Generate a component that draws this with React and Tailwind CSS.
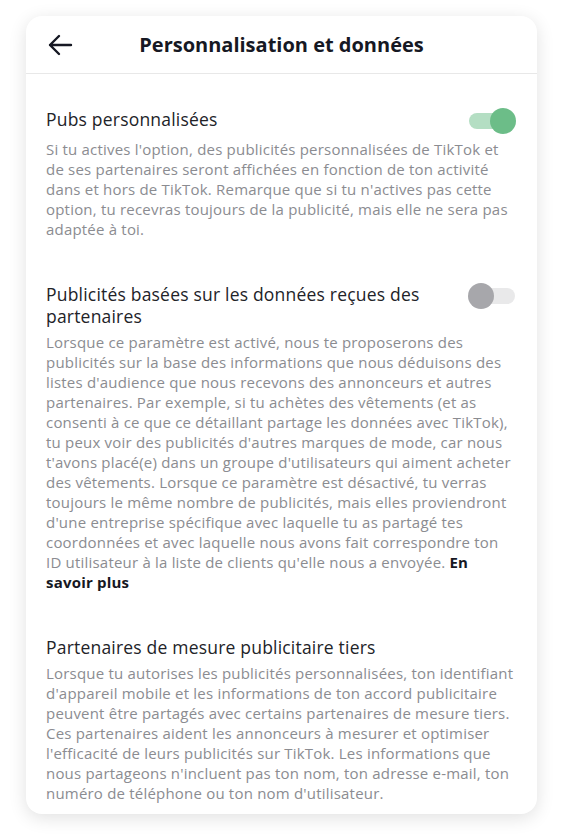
import React, { useState } from 'react';

const Toggle = ({ on, onChange }) => (
  <button
    onClick={onChange}
    className="relative mr-[4px] w-[48px] h-[26px] shrink-0 flex items-center"
  >
    <span className={`absolute left-[1px] right-[1px] h-[16px] rounded-full ${on ? 'bg-[#b4dec3]' : 'bg-[#e9e9ea]'}`}></span>
    <span
      className={`absolute top-0 w-[26px] h-[26px] rounded-full ${on ? 'right-0 bg-[#6cbd88]' : 'left-0 bg-[#a7a7ab]'}`}
    ></span>
  </button>
);

const Section = ({ title, children, toggle }) => (
  <div>
    <div className="flex items-start justify-between gap-6">
      <h3 className="text-[17.5px] leading-[22px] tracking-[0.2px] text-[#222328] max-w-[400px]">{title}</h3>
      {toggle}
    </div>
    <p className="mt-[5px] text-[15px] leading-[20px] tracking-[0.2px] text-[#8b8c91]">{children}</p>
  </div>
);

export default function App() {
  const [pubs, setPubs] = useState(true);
  const [partners, setPartners] = useState(false);

  return (
    <div className="min-h-screen bg-white pt-[16px] pb-[24px] font-['Open_Sans',sans-serif]">
      <div className="ml-[26px] w-[511px] bg-white rounded-2xl shadow-[0_4px_18px_rgba(0,0,0,0.12)]">
        {/* Header */}
        <div className="relative h-[58px] flex items-center justify-center border-b border-[#e8e8e8]">
          <button className="absolute left-[21px] top-[17px] w-[26px] h-[24px]">
            <svg width="26" height="24" viewBox="0 0 26 24" fill="none">
              <path d="M24 12H3M12 3L3 12L12 21" stroke="#161823" strokeWidth="2.4" strokeLinecap="round" strokeLinejoin="round" />
            </svg>
          </button>
          <h1 className="text-[20px] font-bold text-[#161823]">Personnalisation et données</h1>
        </div>

        {/* Contenu */}
        <div className="pl-[20px] pr-[17px] pt-[34px] pb-[11px] flex flex-col gap-[44px]">
          <Section
            title="Pubs personnalisées"
            toggle={<Toggle on={pubs} onChange={() => setPubs(!pubs)} />}
          >
            Si tu actives l'option, des publicités personnalisées de TikTok et de ses partenaires seront affichées en fonction de ton activité dans et hors de TikTok. Remarque que si tu n'actives pas cette option, tu recevras toujours de la publicité, mais elle ne sera pas adaptée à toi.
          </Section>

          <Section
            title="Publicités basées sur les données reçues des partenaires"
            toggle={<Toggle on={partners} onChange={() => setPartners(!partners)} />}
          >
            Lorsque ce paramètre est activé, nous te proposerons des publicités sur la base des informations que nous déduisons des listes d'audience que nous recevons des annonceurs et autres partenaires. Par exemple, si tu achètes des vêtements (et as consenti à ce que ce détaillant partage les données avec TikTok), tu peux voir des publicités d'autres marques de mode, car nous t'avons placé(e) dans un groupe d'utilisateurs qui aiment acheter des vêtements. Lorsque ce paramètre est désactivé, tu verras toujours le même nombre de publicités, mais elles proviendront d'une entreprise spécifique avec laquelle tu as partagé tes coordonnées et avec laquelle nous avons fait correspondre ton ID{'\u00a0'}utilisateur à la liste de clients qu'elle nous a envoyée.{' '}
            <a href="#" className="font-bold text-[#161823]">En savoir{'\u00a0'}plus</a>
          </Section>

          <Section title="Partenaires de mesure publicitaire tiers">
            Lorsque tu autorises les publicités personnalisées, ton identifiant d'appareil mobile et les informations de ton accord publicitaire peuvent être partagés avec certains partenaires de mesure tiers. Ces partenaires aident les annonceurs à mesurer et optimiser l'efficacité de leurs publicités sur TikTok. Les informations que nous partageons n'incluent pas ton nom, ton adresse e-mail, ton numéro de téléphone ou ton nom d'utilisateur.
          </Section>
        </div>
      </div>
    </div>
  );
}
